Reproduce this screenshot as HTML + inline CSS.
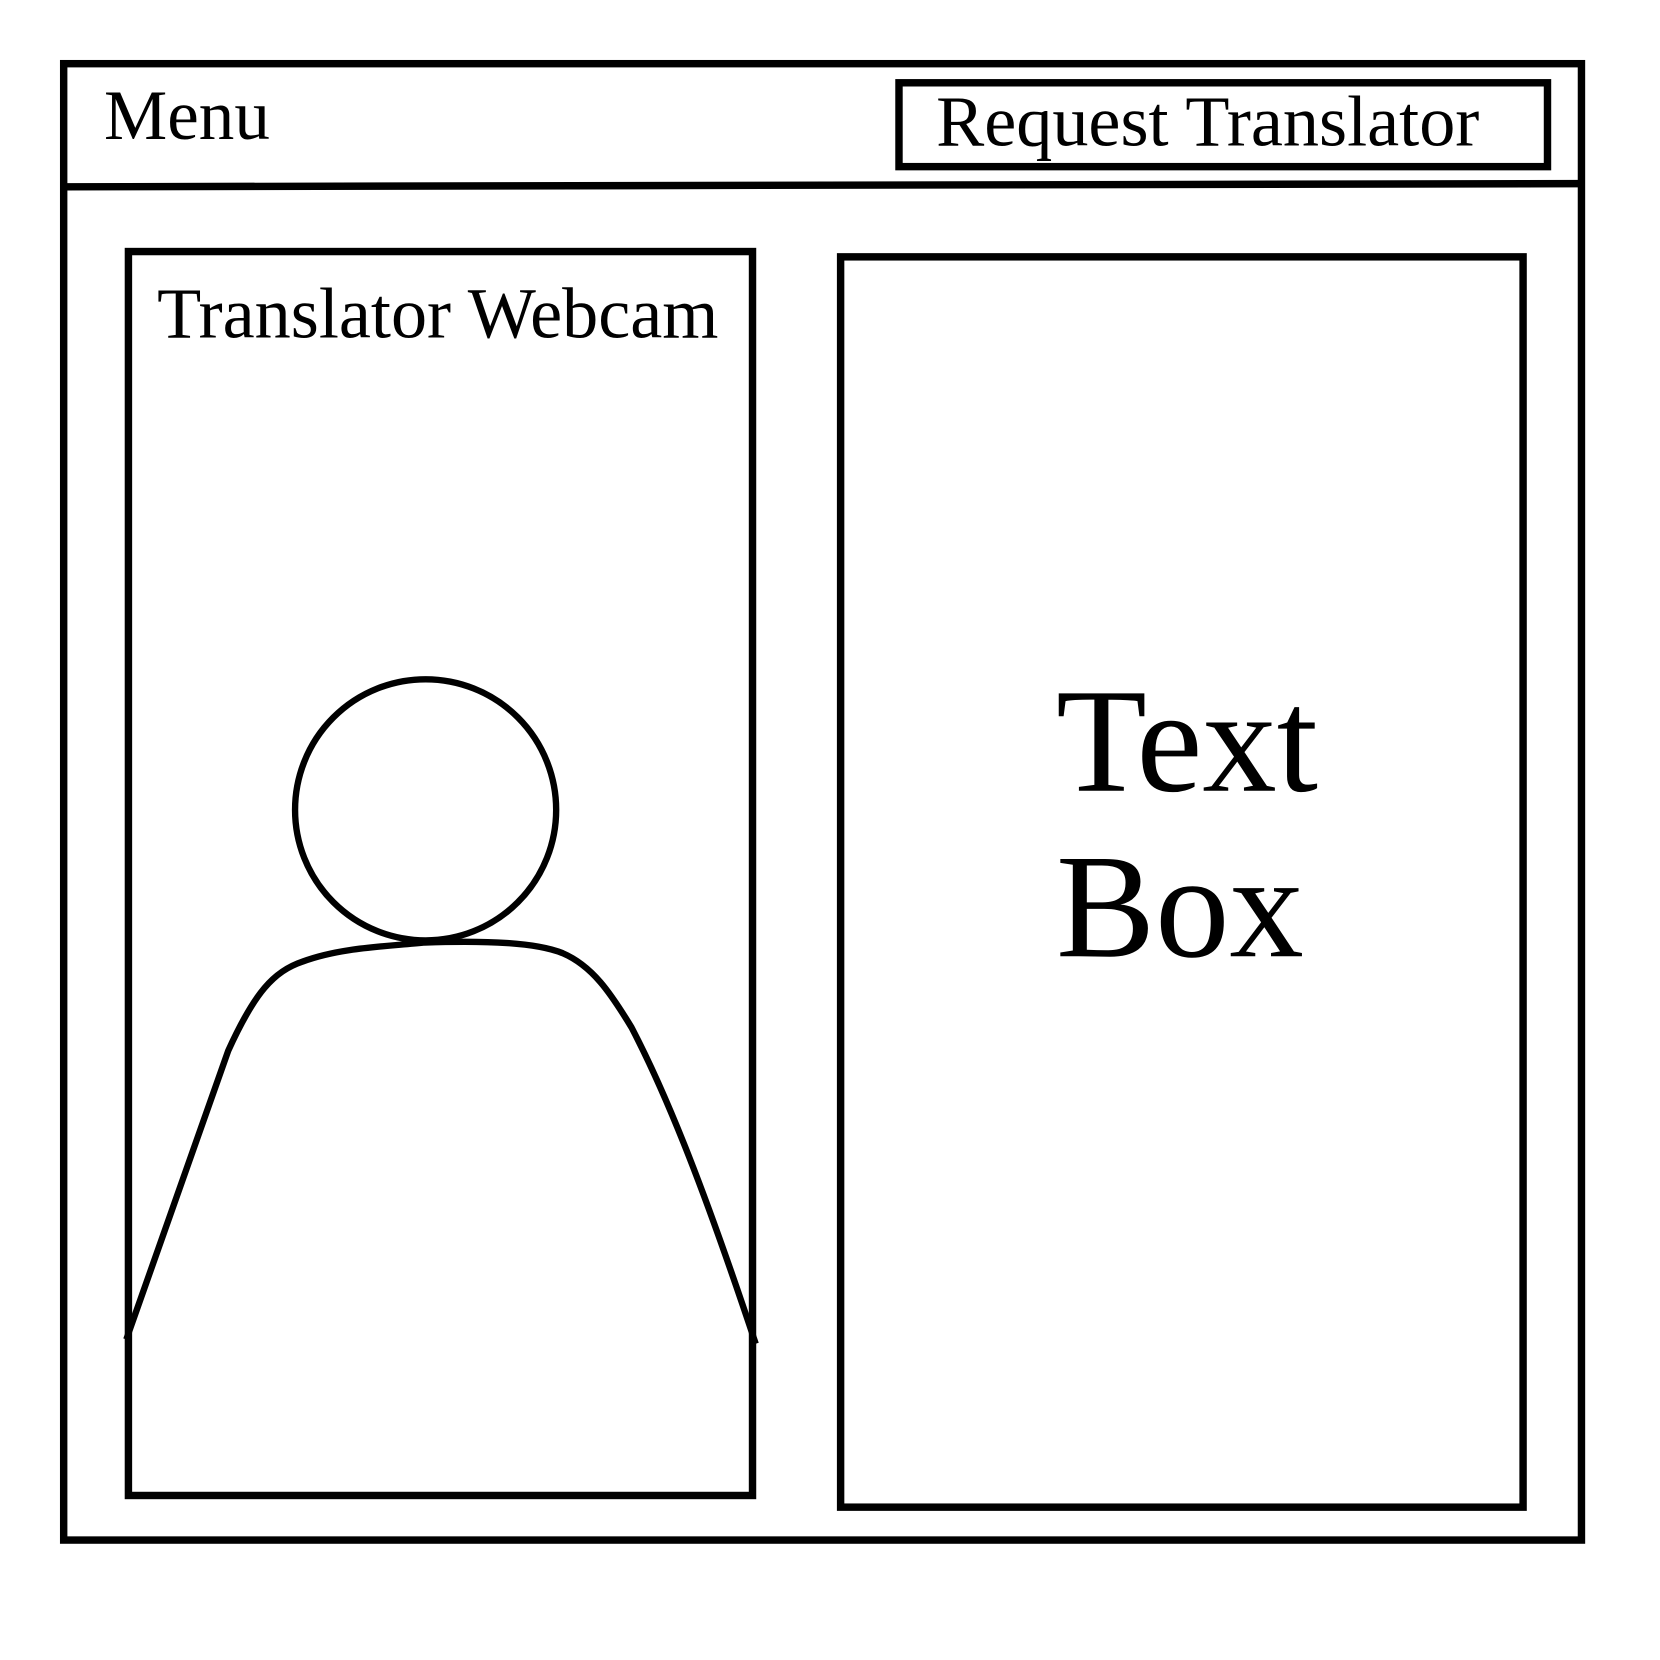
<!DOCTYPE html>
<html><head><style>html,body{margin:0;padding:0;background:#fff;width:1660px;height:1660px;overflow:hidden}</style></head>
<body>
<svg width="1660" height="1660" viewBox="0 0 1564 1564" xmlns="http://www.w3.org/2000/svg" font-family="'Liberation Serif', serif" fill="none" stroke="#000">
<rect x="60" y="60" width="1430" height="1391" stroke-width="7"/>
<line x1="60" y1="176" x2="1490" y2="173" stroke-width="7"/>
<rect x="847" y="78" width="611" height="79" stroke-width="7"/>
<rect x="121" y="237" width="588" height="1172" stroke-width="7"/>
<rect x="792" y="242" width="643" height="1178" stroke-width="7"/>
<circle cx="401" cy="763" r="123" stroke-width="6"/>
<path d="M119 1262 L215 990 C240 935 258 915 285 906 C320 893 360 892 400 888 C460 886 505 888 530 898 C558 910 575 935 595 968 C630 1035 665 1125 712 1266" stroke-width="6"/>
<g fill="#000" stroke="none">
<text x="98" y="131" font-size="67">Menu</text>
<text x="882" y="137" font-size="68">Request Translator</text>
<text x="148" y="318" font-size="68">Translator Webcam</text>
<text x="995" y="745" font-size="140">Text</text>
<text x="995" y="901" font-size="140">Box</text>
</g>
</svg>
</body></html>
